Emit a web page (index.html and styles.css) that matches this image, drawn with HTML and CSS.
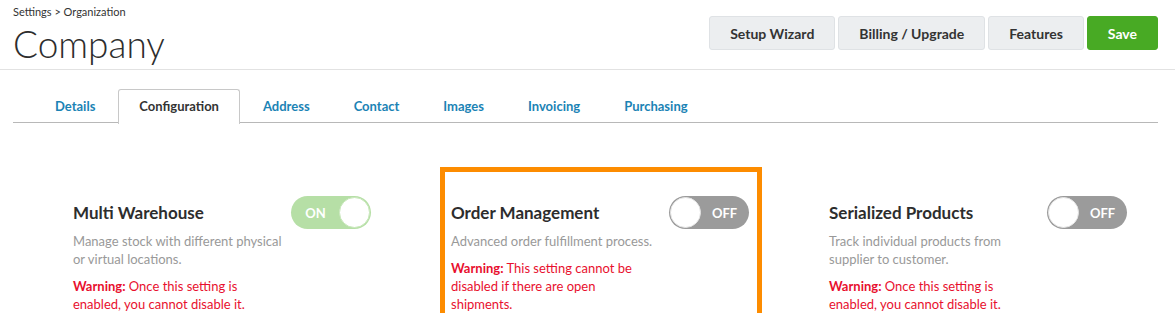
FILE: index.html
```html
<!DOCTYPE html>
<html lang="en">
<head>
  <meta charset="UTF-8">
  <title>Company - Configuration</title>
  <link rel="stylesheet" href="styles.css">
</head>
<body>
  <div class="header">
    <div class="title-block">
      <div class="breadcrumb">Settings &gt; Organization</div>
      <h1>Company</h1>
    </div>
    <div class="actions">
      <button class="btn">Setup Wizard</button>
      <button class="btn">Billing / Upgrade</button>
      <button class="btn">Features</button>
      <button class="btn btn-save">Save</button>
    </div>
  </div>

  <ul class="tabs">
    <li>Details</li>
    <li class="active">Configuration</li>
    <li>Address</li>
    <li>Contact</li>
    <li>Images</li>
    <li>Invoicing</li>
    <li>Purchasing</li>
  </ul>

  <div class="settings">
    <div class="setting">
      <div class="setting-head">
        <h3>Multi Warehouse</h3>
        <div class="toggle on"><span class="label">ON</span><span class="knob"></span></div>
      </div>
      <p class="desc">Manage stock with different physical or virtual locations.</p>
      <p class="warn"><b>Warning:</b> Once this setting is enabled, you cannot disable it.</p>
    </div>

    <div class="setting">
      <div class="highlight"></div>
      <div class="setting-head">
        <h3>Order Management</h3>
        <div class="toggle"><span class="knob"></span><span class="label">OFF</span></div>
      </div>
      <p class="desc">Advanced order fulfillment process.</p>
      <p class="warn"><b>Warning:</b> This setting cannot be disabled if there are open shipments.</p>
    </div>

    <div class="setting">
      <div class="setting-head">
        <h3>Serialized Products</h3>
        <div class="toggle"><span class="knob"></span><span class="label">OFF</span></div>
      </div>
      <p class="desc">Track individual products from supplier to customer.</p>
      <p class="warn"><b>Warning:</b> Once this setting is enabled, you cannot disable it.</p>
    </div>
  </div>
</body>
</html>
```

FILE: styles.css
```css
body {
  margin: 0;
  font-family: Lato, "Open Sans", sans-serif;
  color: #333;
  background: #fff;
}
.header {
  display: flex;
  justify-content: space-between;
  padding: 0 17px 0 13px;
  height: 69px;
  border-bottom: 1px solid #e2e2e2;
}
.breadcrumb {
  font-size: 11px;
  line-height: 14px;
  margin-top: 5px;
}
h1 {
  margin: 4px 0 0 0;
  font-size: 37px;
  font-weight: 300;
  line-height: 42px;
  color: #2d2d2d;
}
.actions {
  display: flex;
  gap: 3px;
  margin-top: 16px;
  height: 34px;
}
.btn {
  font-family: inherit;
  font-size: 14px;
  font-weight: 700;
  color: #333;
  background: #eceef0;
  border: 1px solid #dfe2e5;
  border-radius: 3px;
  padding: 0 20px;
  cursor: pointer;
}
.btn-save {
  background: #48aa24;
  border-color: #48aa24;
  color: #fff;
}
.tabs {
  list-style: none;
  display: flex;
  margin: 19px 17px 0 13px;
  padding: 0 0 0 21px;
  border-bottom: 1px solid #b8b8b8;
  height: 33px;
}
.tabs li {
  padding: 0 20px;
  margin-right: 2px;
  line-height: 33px;
  font-size: 13px;
  font-weight: 700;
  color: #1b83b5;
  border: 1px solid transparent;
  border-bottom: none;
  border-radius: 3px 3px 0 0;
}
.tabs li.active {
  color: #333;
  background: #fff;
  border-color: #c8c8c8;
  height: 34px;
}
.settings {
  display: grid;
  grid-template-columns: repeat(3, 298px);
  column-gap: 80px;
  padding-left: 73px;
  margin-top: 73px;
}
.setting {
  position: relative;
}
.setting-head {
  display: flex;
  justify-content: space-between;
  align-items: center;
  height: 33px;
}
h3 {
  margin: 0;
  font-size: 17px;
  font-weight: 700;
  color: #2d2d2d;
}
.desc, .warn {
  width: 215px;
  font-size: 13px;
  line-height: 18px;
  margin: 3px 0 0 0;
  color: #999;
}
.warn {
  width: 200px;
  margin-top: 9px;
  color: #e8102e;
}
.warn b {
  font-weight: 700;
}
.toggle {
  display: flex;
  align-items: center;
  justify-content: space-between;
  width: 80px;
  height: 33px;
  box-sizing: border-box;
  border-radius: 17px;
  background: #9b9b9b;
  padding: 1px;
}
.toggle.on {
  background: #b6dfa6;
}
.knob {
  width: 31px;
  height: 31px;
  border-radius: 50%;
  background: #fff;
  box-sizing: border-box;
  border: 1px solid #e4e4e4;
}
.toggle.on .knob {
  border-color: #c9e8bc;
}
.toggle .label {
  flex: 1;
  text-align: center;
  color: #fff;
  font-size: 13px;
  font-weight: 700;
}
.highlight {
  position: absolute;
  left: -11px;
  top: -29px;
  width: 322px;
  height: 156px;
  box-sizing: border-box;
  border: 5px solid #fd8c00;
  pointer-events: none;
}
```
